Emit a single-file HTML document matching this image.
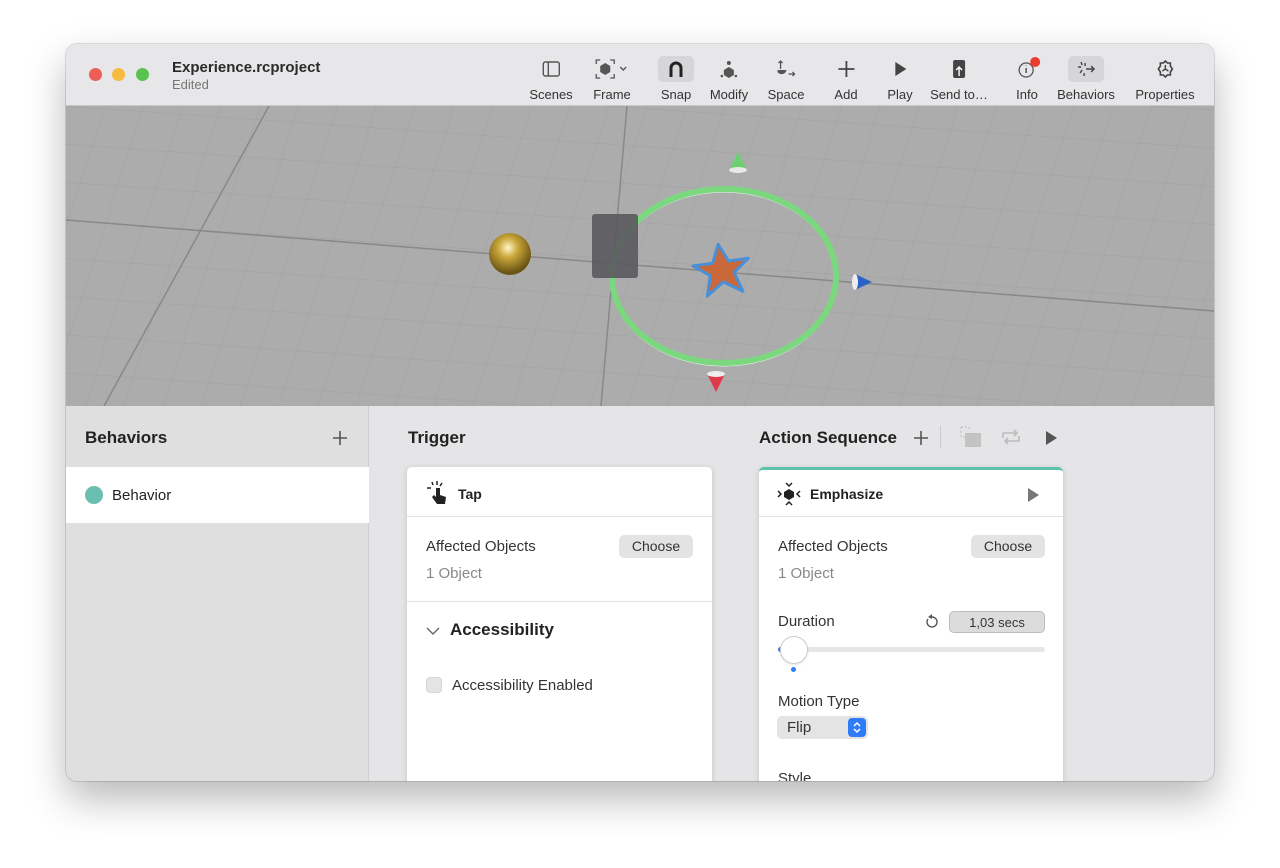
<!DOCTYPE html>
<html><head><meta charset="utf-8"><style>
*{box-sizing:border-box;margin:0;padding:0}
body{width:1280px;height:868px;background:#fff;font-family:"Liberation Sans",sans-serif;position:relative;overflow:hidden;color:#222}
.win{position:absolute;left:66px;top:44px;width:1148px;height:737px;border-radius:11px;overflow:hidden;box-shadow:0 18px 40px rgba(0,0,0,.28),0 0 0 1px rgba(0,0,0,.12);background:#e5e4e6}
.tb{position:absolute;left:0;top:0;width:100%;height:62px;background:#e7e6e8;border-bottom:1px solid #c8c8c8}
.dot{position:absolute;top:24px;width:13px;height:13px;border-radius:50%}
.title{position:absolute;left:106px;top:15px;font-weight:bold;font-size:15px;color:#2a2a2a}
.sub{position:absolute;left:106px;top:33px;font-size:13px;color:#777}
.ti{position:absolute;top:12px;text-align:center;font-size:13px;color:#333;transform:translateX(-50%)}
.ti .ic{height:26px;display:flex;align-items:center;justify-content:center;margin-bottom:5px}
.vp{position:absolute;left:0;top:62px;width:100%;height:300px;background:#acacac;overflow:hidden}
.bp{position:absolute;left:0;top:362px;width:100%;height:375px}
.side{position:absolute;left:0;top:0;width:303px;height:100%;background:#dfdfdf;border-right:1px solid #cfcfcf}
.card{position:absolute;background:#fff;border-radius:5px 5px 0 0;box-shadow:0 1px 6px rgba(0,0,0,.15)}
.lbl{font-size:15px;color:#333;position:absolute}
.gray{color:#888}
.btn{position:absolute;background:#e3e3e3;border-radius:5px;font-size:14px;color:#333;text-align:center;line-height:23px;height:23px}
.hr{position:absolute;left:0;width:100%;height:1px;background:#e2e2e2}
</style></head><body>
<div class="win">
 <div class="tb">
  <div class="dot" style="left:23px;background:#ee5e57"></div>
  <div class="dot" style="left:46px;background:#f5bb3f"></div>
  <div class="dot" style="left:70px;background:#5ac24f"></div>
  <div class="title">Experience.rcproject</div>
  <div class="sub">Edited</div>
  <div class="ti" style="left:485px"><div class="ic"><svg width="18" height="16"><rect x="1" y="1" width="16" height="14" rx="2" fill="none" stroke="#555" stroke-width="1.4"/><line x1="6" y1="1" x2="6" y2="15" stroke="#555" stroke-width="1.4"/></svg></div>Scenes</div>
  <div class="ti" style="left:546px"><div class="ic"><svg width="36" height="22"><path d="M2 6V2h4M16 2h4v4M20 16v4h-4M6 20H2v-4" fill="none" stroke="#555" stroke-width="1.3"/><path d="M11 5l5 3v6l-5 3-5-3V8z" fill="#555"/><path d="M26 9l3 3 3-3" fill="none" stroke="#555" stroke-width="1.4"/></svg></div>Frame</div>
  <div class="ti" style="left:610px"><div class="ic" style="background:#d6d5d8;border-radius:5px;width:36px;margin:0 auto 5px"><svg width="16" height="18"><path d="M3 17V8a5 5 0 0 1 10 0v9" fill="none" stroke="#222" stroke-width="3"/></svg></div>Snap</div>
  <div class="ti" style="left:663px"><div class="ic"><svg width="20" height="20"><circle cx="10" cy="4" r="2" fill="#555"/><path d="M10 8l5 3v5l-5 3-5-3v-5z" fill="#555"/><circle cx="3" cy="17" r="1.3" fill="#555"/><circle cx="17" cy="17" r="1.3" fill="#555"/></svg></div>Modify</div>
  <div class="ti" style="left:720px"><div class="ic"><svg width="22" height="20"><path d="M6 2v8M4 4l2-2 2 2" stroke="#555" fill="none" stroke-width="1.3"/><path d="M3 11h9a5 5 0 0 1-9 2z" fill="#555"/><path d="M14 15h6M18 13l2 2-2 2" stroke="#555" fill="none" stroke-width="1.3"/></svg></div>Space</div>
  <div class="ti" style="left:780px"><div class="ic"><svg width="18" height="18"><path d="M9 1v16M1 9h16" stroke="#444" stroke-width="1.8"/></svg></div>Add</div>
  <div class="ti" style="left:834px"><div class="ic"><svg width="14" height="16"><path d="M2 1l11 7-11 7z" fill="#444"/></svg></div>Play</div>
  <div class="ti" style="left:893px"><div class="ic"><svg width="14" height="20"><rect x="1" y="1" width="12" height="18" rx="2" fill="#444"/><path d="M7 17V8M4 11l3-3 3 3" stroke="#fff" fill="none" stroke-width="1.4"/></svg></div>Send to…</div>
  <div class="ti" style="left:961px"><div class="ic" style="position:relative"><svg width="20" height="20"><circle cx="9" cy="11" r="7" fill="none" stroke="#555" stroke-width="1.3"/><path d="M9 9v5M9 6.5v.5" stroke="#555" stroke-width="1.5"/></svg><span style="position:absolute;left:50%;margin-left:3px;top:1px;width:10px;height:10px;border-radius:50%;background:#ee3b30"></span></div>Info</div>
  <div class="ti" style="left:1020px"><div class="ic" style="background:#d6d5d8;border-radius:5px;width:36px;margin:0 auto 5px"><svg width="22" height="20"><path d="M6 3l1 3M3 8h3M5 14l2-3M9 17v-3M10 4v3" stroke="#444" stroke-width="1.4"/><path d="M11 10h8M16 7l3 3-3 3" stroke="#444" fill="none" stroke-width="1.4"/></svg></div>Behaviors</div>
  <div class="ti" style="left:1099px"><div class="ic"><svg width="20" height="20"><path d="M10 2l2 2h3v3l2 3-2 3v3h-3l-2 2-2-2H5v-3l-2-3 2-3V4h3z" fill="none" stroke="#444" stroke-width="1.6"/><path d="M10 10V6M10 10l-3 2M10 10l3 2" stroke="#444" stroke-width="1.4"/></svg></div>Properties</div>
 </div>
 <div class="vp">
  <svg width="1148" height="300" style="position:absolute;left:0;top:0">
   <defs><pattern id="g" width="38" height="38" patternUnits="userSpaceOnUse" patternTransform="rotate(4) skewX(-14)"><path d="M0 0H38M0 0V38" stroke="#a0a0a0" stroke-width="1" fill="none"/></pattern></defs>
   <rect width="1148" height="300" fill="url(#g)"/>
   <line x1="0" y1="114" x2="1148" y2="205" stroke="#888" stroke-width="1.5"/>
   <line x1="203" y1="0" x2="38" y2="300" stroke="#888" stroke-width="1.5"/>
   <line x1="561" y1="0" x2="535" y2="300" stroke="#888" stroke-width="1.5"/>
   <ellipse cx="658" cy="170" rx="112" ry="87" fill="none" stroke="#f2f2f2" stroke-width="3" transform="translate(0 2)"/>
   <ellipse cx="658" cy="170" rx="112" ry="87" fill="none" stroke="#7bd87f" stroke-width="6"/>
   <rect x="526" y="108" width="46" height="64" rx="3" fill="#5a5a5e" opacity=".9"/>
   <defs><radialGradient id="gold" cx=".45" cy=".35" r=".6"><stop offset="0" stop-color="#fff6c8"/><stop offset=".4" stop-color="#c9a63a"/><stop offset="1" stop-color="#6b5414"/></radialGradient></defs>
   <circle cx="444" cy="148" r="21" fill="url(#gold)"/>
   <path d="M656 138l8 18 20 0-16 12 6 20-18-12-18 12 6-20-16-12 20 0z" fill="#c9683a" stroke="#4a90d8" stroke-width="3" stroke-linejoin="round" transform="rotate(-8 656 166)"/>
   <path d="M672 46l-9 18h18z" fill="#6ccf70"/><ellipse cx="672" cy="64" rx="9" ry="3" fill="#e8e8e8"/>
   <path d="M641 268l9 18 9-18z" fill="#e03a4a"/><ellipse cx="650" cy="268" rx="9" ry="3" fill="#eee"/>
   <path d="M789 168l17 8-17 8z" fill="#2a62c8"/><ellipse cx="789" cy="176" rx="3" ry="8" fill="#eee"/>
  </svg>
 </div>
 <div class="bp">
  <div class="side">
   <div style="position:absolute;left:19px;top:22px;font-size:17px;font-weight:bold;color:#222">Behaviors</div>
   <svg width="16" height="16" style="position:absolute;left:266px;top:24px"><path d="M8 1v14M1 8h14" stroke="#555" stroke-width="1.6"/></svg>
   <div style="position:absolute;left:0;top:61px;width:303px;height:56px;background:#fff">
    <div style="position:absolute;left:19px;top:19px;width:18px;height:18px;border-radius:50%;background:#6bbfb0"></div>
    <div style="position:absolute;left:46px;top:20px;font-size:15px">Behavior</div>
   </div>
  </div>
  <div style="position:absolute;left:342px;top:22px;font-size:17px;font-weight:bold">Trigger</div>
  <div style="position:absolute;left:693px;top:22px;font-size:17px;font-weight:bold">Action Sequence</div>
  <svg width="16" height="16" style="position:absolute;left:847px;top:24px"><path d="M8 1v14M1 8h14" stroke="#555" stroke-width="1.6"/></svg>
  <div style="position:absolute;left:874px;top:20px;width:1px;height:22px;background:#ccc"></div>
  <svg width="24" height="24" style="position:absolute;left:893px;top:19px"><path d="M2 2h8v4M2 2v10h4" fill="none" stroke="#bbb" stroke-dasharray="2 2"/><rect x="6" y="8" width="16" height="14" fill="#c3c3c3"/></svg>
  <svg width="24" height="22" style="position:absolute;left:933px;top:20px"><path d="M4 12V7h14M15 4l3 3-3 3M20 10v5H6M9 18l-3-3 3-3" fill="none" stroke="#bbb" stroke-width="1.6"/></svg>
  <svg width="14" height="16" style="position:absolute;left:979px;top:24px"><path d="M1 1l11 7-11 7z" fill="#555"/></svg>

  <div class="card" style="left:341px;top:61px;width:305px;height:330px">
   <svg width="24" height="26" style="position:absolute;left:18px;top:13px"><path d="M2 8h4M7 2l1 3M12 1v4M17 3l-2 3" stroke="#222" stroke-width="1.5"/><path d="M11 8v9l-2-2-2 2 5 7h8l1-7-6-2V8z" fill="#222"/></svg>
   <div style="position:absolute;left:51px;top:19px;font-size:14px;font-weight:bold">Tap</div>
   <div class="hr" style="top:49px"></div>
   <div class="lbl" style="left:19px;top:71px">Affected Objects</div>
   <div class="btn" style="left:212px;top:68px;width:74px">Choose</div>
   <div class="lbl gray" style="left:19px;top:98px">1 Object</div>
   <div class="hr" style="top:134px"></div>
   <svg width="14" height="10" style="position:absolute;left:19px;top:159px"><path d="M1 2l6 6 6-6" fill="none" stroke="#666" stroke-width="1.4"/></svg>
   <div style="position:absolute;left:43px;top:153px;font-size:17px;font-weight:bold">Accessibility</div>
   <div style="position:absolute;left:19px;top:210px;width:16px;height:16px;border-radius:4px;background:#e4e4e4;border:1px solid #d6d6d6"></div>
   <div class="lbl" style="left:45px;top:210px">Accessibility Enabled</div>
  </div>

  <div class="card" style="left:693px;top:61px;width:304px;height:330px;border-top:3px solid #5cc4ad">
   <svg width="26" height="26" style="position:absolute;left:17px;top:11px"><path d="M10 2l3 3 3-3M10 24l3-3 3 3M2 10l3 3-3 3M24 10l-3 3 3 3" fill="none" stroke="#222" stroke-width="1.5"/><path d="M13 8l5 3v5l-5 3-5-3v-5z" fill="#222"/></svg>
   <div style="position:absolute;left:51px;top:16px;font-size:14px;font-weight:bold">Emphasize</div>
   <svg width="14" height="16" style="position:absolute;left:268px;top:17px"><path d="M1 1l11 7-11 7z" fill="#777"/></svg>
   <div class="hr" style="top:46px"></div>
   <div class="lbl" style="left:19px;top:68px">Affected Objects</div>
   <div class="btn" style="left:212px;top:65px;width:74px">Choose</div>
   <div class="lbl gray" style="left:19px;top:95px">1 Object</div>
   <div class="lbl" style="left:19px;top:143px">Duration</div>
   <svg width="16" height="16" style="position:absolute;left:165px;top:144px"><path d="M4 5a5 5 0 1 0 4-2" fill="none" stroke="#555" stroke-width="1.4"/><path d="M8 0l-4 3 4 2" fill="#555"/></svg>
   <div class="btn" style="left:190px;top:141px;width:96px;height:22px;line-height:21px;font-size:13px;background:#dcdcdc;border:1px solid #bdbdbd">1,03 secs</div>
   <div style="position:absolute;left:19px;top:177px;width:267px;height:5px;border-radius:3px;background:#e6e6e6"></div>
   <div style="position:absolute;left:19px;top:177px;width:8px;height:5px;border-radius:3px;background:#2f7cf6"></div>
   <div style="position:absolute;left:22px;top:167px;width:26px;height:26px;border-radius:50%;background:#fff;box-shadow:0 0 0 1px #ccc,0 1px 3px rgba(0,0,0,.2)"></div>
   <div style="position:absolute;left:32px;top:197px;width:5px;height:5px;border-radius:50%;background:#2f7cf6"></div>
   <div class="lbl" style="left:19px;top:223px">Motion Type</div>
   <div style="position:absolute;left:18px;top:246px;width:91px;height:23px;border-radius:5px;background:#e4e4e4"></div>
   <div class="lbl" style="left:28px;top:249px">Flip</div>
   <div style="position:absolute;left:89px;top:248px;width:18px;height:19px;border-radius:4px;background:#2f7cf6"><svg width="18" height="19"><path d="M6 8l3-3 3 3M6 11l3 3 3-3" fill="none" stroke="#fff" stroke-width="1.5"/></svg></div>
   <div class="lbl" style="left:19px;top:300px">Style</div>
  </div>
 </div>
</div>
</body></html>
